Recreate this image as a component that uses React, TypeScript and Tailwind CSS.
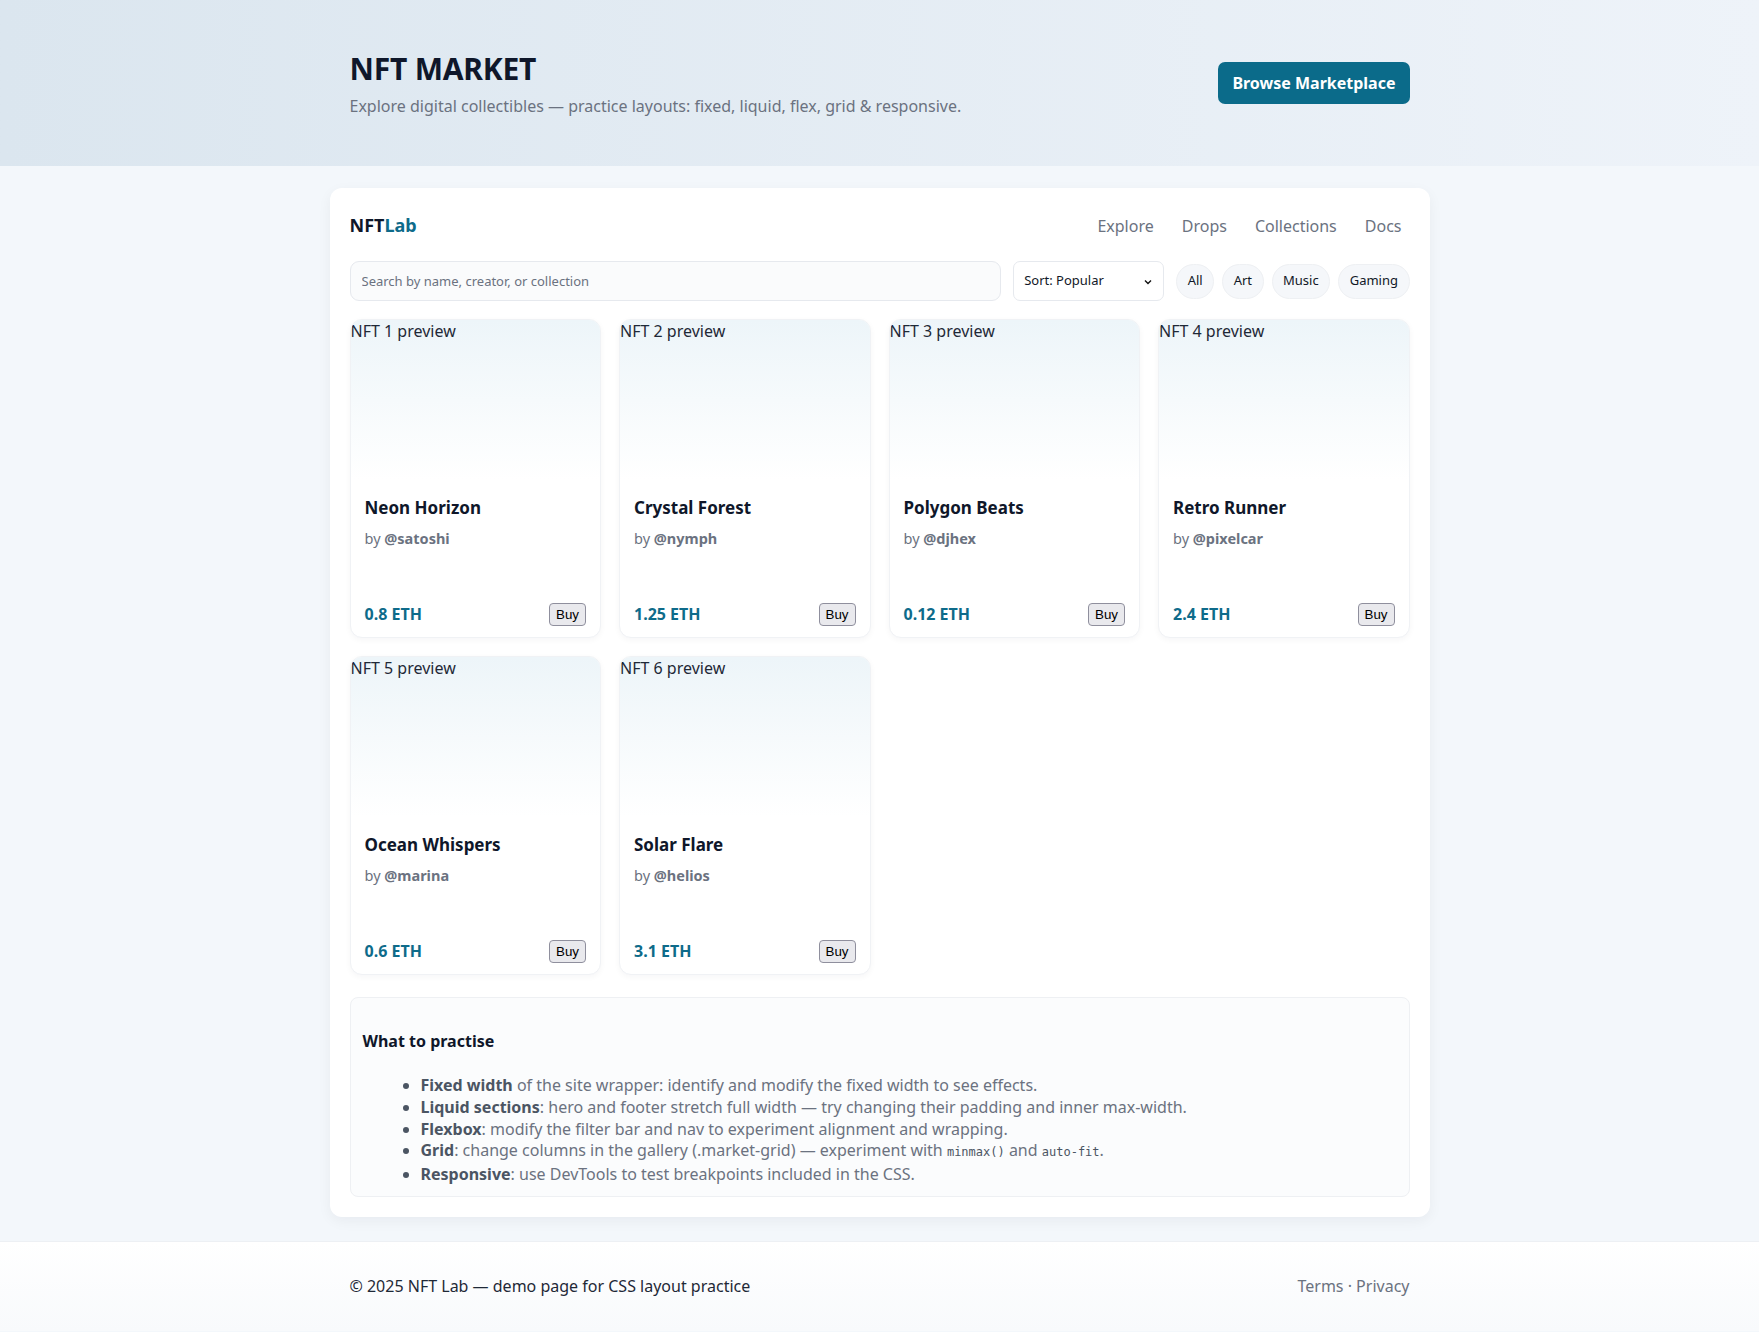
import React from "react";

const items = [
  { n: 1, title: "Neon Horizon", by: "@satoshi", price: "0.8 ETH" },
  { n: 2, title: "Crystal Forest", by: "@nymph", price: "1.25 ETH" },
  { n: 3, title: "Polygon Beats", by: "@djhex", price: "0.12 ETH" },
  { n: 4, title: "Retro Runner", by: "@pixelcar", price: "2.4 ETH" },
  { n: 5, title: "Ocean Whispers", by: "@marina", price: "0.6 ETH" },
  { n: 6, title: "Solar Flare", by: "@helios", price: "3.1 ETH" },
];

function Card({ n, title, by, price }: { n: number; title: string; by: string; price: string }) {
  return (
    <div className="h-[319px] flex flex-col rounded-[12px] border border-[#f0f2f5] bg-white shadow-[0_2px_6px_rgba(15,23,42,0.04)] overflow-hidden">
      <div className="h-[160px] bg-linear-to-b from-[#edf5f9] to-white text-[16px] leading-[22px] text-[#1f2937]">
        NFT {n} preview
      </div>
      <div className="flex-1 flex flex-col px-[14px] pt-[16px] pb-[11px]">
        <div className="text-[17px] leading-[24px] font-bold text-[#0f172a]">{title}</div>
        <div className="mt-[8px] text-[14.5px] leading-[20px] text-[#6b7280]">
          by <span className="font-bold">{by}</span>
        </div>
        <div className="mt-auto flex items-center justify-between">
          <span className="text-[16px] font-bold text-[#0e6b8a]">{price}</span>
          <button className="font-['Liberation_Sans',Arial,sans-serif] text-[13.33px] leading-[17px] text-black px-[6px] py-[2px] bg-[#e9e9ed] border border-[#8f8f9d] rounded-[4px]">
            Buy
          </button>
        </div>
      </div>
    </div>
  );
}

export default function App() {
  return (
    <div className="min-h-screen bg-[#f3f7fb] font-['Noto_Sans',sans-serif] text-[#0f172a]">
      {/* Hero */}
      <section className="h-[166px] bg-linear-to-r from-[#dbe6ef] to-[#eef3f9] flex items-center">
        <div className="w-[1060px] mx-auto flex items-center justify-between">
          <div className="pt-[3px]">
            <h1 className="text-[30px] leading-[36px] font-bold text-[#0f172a] tracking-[-0.2px]">NFT MARKET</h1>
            <p className="mt-[7px] text-[16px] leading-[24px] text-[#6b7280]">
              Explore digital collectibles — practice layouts: fixed, liquid, flex, grid &amp; responsive.
            </p>
          </div>
          <button className="h-[42px] px-[14px] rounded-[7px] bg-[#0b6b8a] text-white text-[16px] font-bold">
            Browse Marketplace
          </button>
        </div>
      </section>

      {/* Main */}
      <main className="pt-[22px] pb-[24px]">
        <div className="w-[1100px] mx-auto bg-white rounded-[12px] p-[20px] shadow-[0_4px_14px_rgba(15,23,42,0.05)]">
          <nav className="h-[34px] flex items-center justify-between mb-[19px] pt-[1px]">
            <div className="text-[18px] font-bold text-[#0f172a]">
              NFT<span className="text-[#0e6b8a]">Lab</span>
            </div>
            <div className="flex items-center gap-[12px] text-[16px] text-[#6b7280]">
              <a className="px-[8px] py-[6px]">Explore</a>
              <a className="px-[8px] py-[6px]">Drops</a>
              <a className="px-[8px] py-[6px]">Collections</a>
              <a className="px-[8px] py-[6px]">Docs</a>
            </div>
          </nav>

          <div className="flex items-center gap-[12px]">
            <input
              className="flex-1 h-[40px] rounded-[9px] border border-[#e6e9ee] bg-[#fafbfc] px-[11px] text-[13px] placeholder:text-[#6b7280] outline-none"
              placeholder="Search by name, creator, or collection"
            />
            <div className="relative w-[151px] h-[40px] rounded-[7px] border border-[#e6e9ee] bg-white flex items-center px-[10px] text-[13px] text-[#111827]">
              Sort: Popular
              <svg className="absolute right-[10px] top-[15px]" width="10" height="10" viewBox="0 0 10 10">
                <path d="M2 3.5 L5 6.5 L8 3.5" fill="none" stroke="#111" strokeWidth="1.4" />
              </svg>
            </div>
            <div className="flex items-center gap-[8px]">
              {["All", "Art", "Music", "Gaming"].map((c) => (
                <span
                  key={c}
                  className="h-[35px] px-[10.5px] rounded-full border border-[#eef0f3] bg-[#f5f7fa] flex items-center text-[13px] text-[#111827]"
                >
                  {c}
                </span>
              ))}
            </div>
          </div>

          <div className="mt-[18px] grid grid-cols-4 gap-[18px]">
            {items.map((it) => (
              <Card key={it.n} {...it} />
            ))}
          </div>

          <section className="mt-[22px] rounded-[8px] border border-[#eef0f3] bg-[#fbfcfd] px-[12px] pt-[12px] pb-[10px]">
            <h3 className="mt-[19px] text-[16px] leading-[24px] font-bold text-[#0f172a]">What to practise</h3>
            <ul className="mt-[22px] pl-[58px] list-disc text-[16px] leading-[21.75px] text-[#6b7280] marker:text-[#4b5563]">
              <li>
                <b className="text-[#4b5563]">Fixed width</b> of the site wrapper: identify and modify the fixed width to see effects.
              </li>
              <li>
                <b className="text-[#4b5563]">Liquid sections</b>: hero and footer stretch full width — try changing their padding and inner max-width.
              </li>
              <li>
                <b className="text-[#4b5563]">Flexbox</b>: modify the filter bar and nav to experiment alignment and wrapping.
              </li>
              <li>
                <b className="text-[#4b5563]">Grid</b>: change columns in the gallery (.market-grid) — experiment with{" "}
                <code className="font-['DejaVu_Sans_Mono',monospace] text-[12px] text-[#4b5563]">minmax()</code> and{" "}
                <code className="font-['DejaVu_Sans_Mono',monospace] text-[12px] text-[#4b5563]">auto-fit</code>.
              </li>
              <li>
                <b className="text-[#4b5563]">Responsive</b>: use DevTools to test breakpoints included in the CSS.
              </li>
            </ul>
          </section>
        </div>
      </main>

      {/* Footer */}
      <footer className="h-[90px] border-t border-[#edf0f4] bg-linear-to-b from-white to-[#f8fafc] flex items-center">
        <div className="w-[1060px] mx-auto flex items-center justify-between">
          <span className="text-[16px] text-[#1f2937]">© 2025 NFT Lab — demo page for CSS layout practice</span>
          <span className="text-[16px] text-[#6b7280]">Terms · Privacy</span>
        </div>
      </footer>
    </div>
  );
}
